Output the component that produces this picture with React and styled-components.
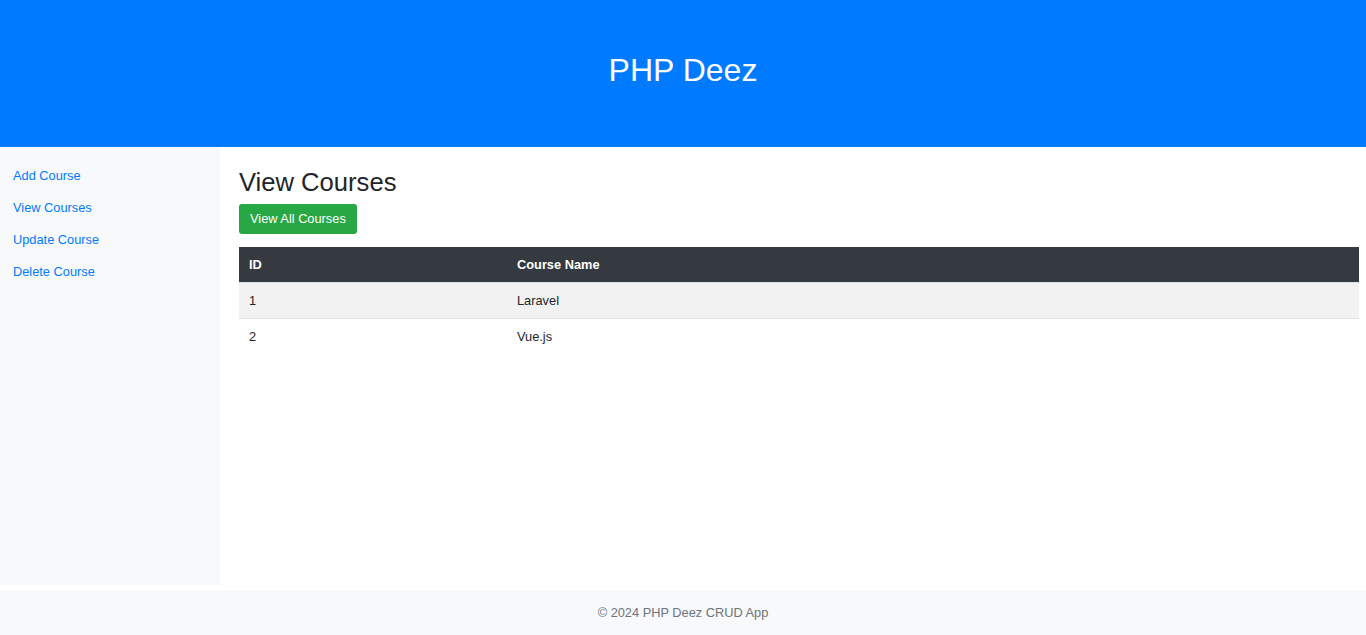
import styled, { createGlobalStyle } from 'styled-components';

const GlobalStyle = createGlobalStyle`
  html, body {
    margin: 0;
    padding: 0;
    background: #fff;
    font-family: "Liberation Sans", Arial, sans-serif;
    color: #212529;
  }
`;

const Header = styled.header`
  background-color: #007bff;
  height: 147px;
  display: flex;
  align-items: center;
  justify-content: center;
  box-sizing: border-box;
  padding-bottom: 6px;

  h1 {
    margin: 0;
    color: #fff;
    font-size: 32px;
    font-weight: 400;
    line-height: 1.2;
  }
`;

const Layout = styled.div`
  display: flex;
  min-height: 438px;
`;

const Sidebar = styled.nav`
  width: 220px;
  flex-shrink: 0;
  background-color: #f8f9fa;
  box-sizing: border-box;
  padding: 13px 13px;
  display: flex;
  flex-direction: column;
`;

const NavLink = styled.a`
  display: block;
  height: 32px;
  line-height: 32px;
  font-size: 12.8px;
  color: #007bff;
  text-decoration: none;
`;

const Main = styled.main`
  flex: 1;
  padding: 20px 7px 20px 19px;
  box-sizing: border-box;

  h2 {
    margin: 0 0 6px;
    font-size: 25.6px;
    font-weight: 400;
    line-height: 1.2;
    color: #212529;
  }
`;

const Button = styled.button`
  background-color: #28a745;
  color: #fff;
  border: none;
  border-radius: 3px;
  font-family: inherit;
  font-size: 12.8px;
  height: 30px;
  padding: 0 11px;
  cursor: pointer;
`;

const Table = styled.table`
  width: 100%;
  margin-top: 13px;
  border-collapse: collapse;
  font-size: 12.8px;

  th, td {
    text-align: left;
    padding: 10px;
    line-height: 15px;
  }

  th {
    background-color: #343a40;
    color: #fff;
    font-weight: 700;
    height: 36px;
    box-sizing: border-box;
  }

  td {
    border-top: 1px solid #dee2e6;
    color: #212529;
  }

  tbody tr:nth-child(odd) {
    background-color: #f2f2f2;
  }
`;

const Footer = styled.footer`
  margin-top: 5px;
  background-color: #f8f9fa;
  height: 45px;
  display: flex;
  align-items: center;
  justify-content: center;
  font-size: 12.8px;
  color: #6c757d;
`;

const courses = [
  { id: 1, name: 'Laravel' },
  { id: 2, name: 'Vue.js' },
];

const App = () => {
  return (
    <>
      <GlobalStyle />
      <Header>
        <h1>PHP Deez</h1>
      </Header>
      <Layout>
        <Sidebar>
          <NavLink href="#">Add Course</NavLink>
          <NavLink href="#">View Courses</NavLink>
          <NavLink href="#">Update Course</NavLink>
          <NavLink href="#">Delete Course</NavLink>
        </Sidebar>
        <Main>
          <h2>View Courses</h2>
          <Button>View All Courses</Button>
          <Table>
            <thead>
              <tr>
                <th style={{ width: '268px' }}>ID</th>
                <th>Course Name</th>
              </tr>
            </thead>
            <tbody>
              {courses.map((c) => (
                <tr key={c.id}>
                  <td>{c.id}</td>
                  <td>{c.name}</td>
                </tr>
              ))}
            </tbody>
          </Table>
        </Main>
      </Layout>
      <Footer>© 2024 PHP Deez CRUD App</Footer>
    </>
  );
};

export default App;
